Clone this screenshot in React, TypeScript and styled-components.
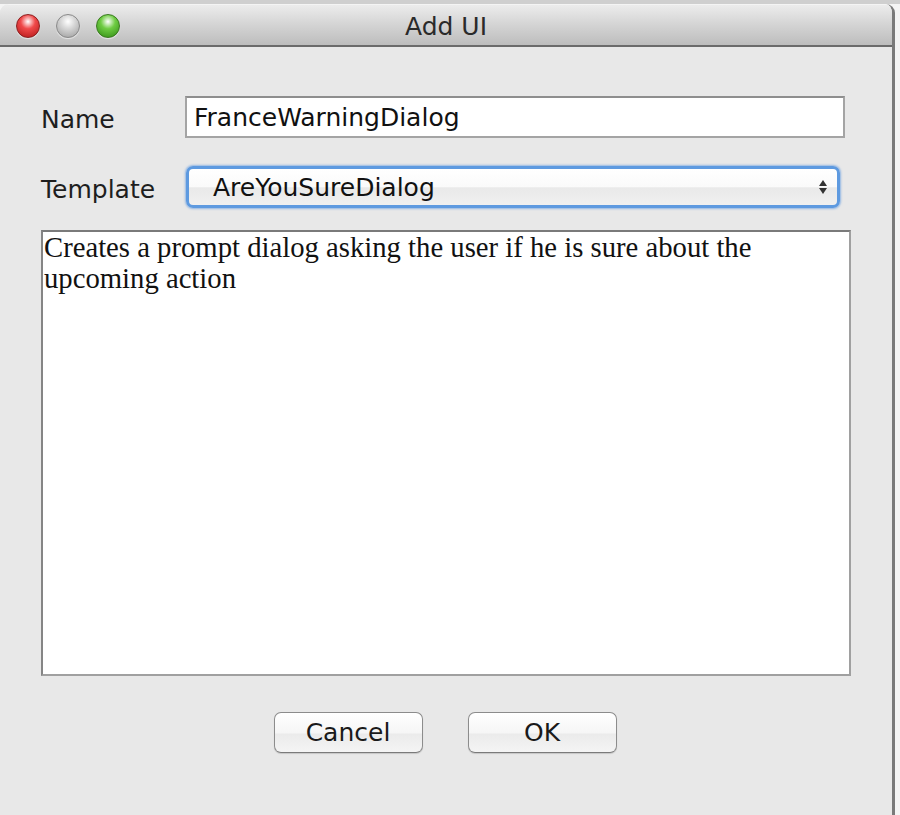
import React from "react";
import styled, { createGlobalStyle } from "styled-components";

const Global = createGlobalStyle`
  html, body { margin: 0; padding: 0; background: #f2f2f2; }
  body { width: 900px; height: 815px; overflow: hidden; }
`;

const Page = styled.div`
  width: 900px;
  height: 815px;
  padding-top: 4px;
  box-sizing: border-box;
  background: linear-gradient(#cfcfcf, #cfcfcf) top / 100% 4px no-repeat, #f4f4f4;
`;

const Window = styled.div`
  width: 895px;
  height: 811px;
  box-sizing: border-box;
  border-right: 3px solid #7a7a7a;
  border-radius: 9px 9px 0 0;
  background: #e8e8e8;
  display: flex;
  flex-direction: column;
  overflow: hidden;
`;

const TitleBar = styled.div`
  height: 43px;
  flex: none;
  position: relative;
  display: flex;
  align-items: center;
  justify-content: center;
  background: linear-gradient(#ececec, #d6d6d6 45%, #bdbdbd);
  border-bottom: 2px solid #6b6b6b;
  border-top: 1px solid #f4f4f4;
  box-sizing: border-box;
`;

const Lights = styled.div`
  position: absolute;
  left: 16px;
  top: 9px;
  display: flex;
  gap: 16px;
`;

const Light = styled.div<{ $c: string; $d: string; $e: string }>`
  width: 24px;
  height: 24px;
  border-radius: 50%;
  box-sizing: border-box;
  border: 1px solid ${(p) => p.$e};
  background: radial-gradient(circle at 50% 30%, #ffffff 0%, ${(p) => p.$c} 38%, ${(p) => p.$d} 100%);
  box-shadow: 0 1px 1px rgba(255, 255, 255, 0.6);
`;

const Title = styled.div`
  font-family: "DejaVu Sans", "Liberation Sans", sans-serif;
  font-size: 25px;
  color: #2a2a2a;
  padding-top: 2px;
`;

const Content = styled.div`
  flex: 1;
  padding: 49px 41px 0 41px;
  display: flex;
  flex-direction: column;
`;

const Row = styled.div<{ $mb: number }>`
  display: flex;
  align-items: center;
  height: 42px;
  margin-bottom: ${(p) => p.$mb}px;
`;

const Label = styled.div`
  width: 144px;
  flex: none;
  font-family: "DejaVu Sans", "Liberation Sans", sans-serif;
  font-size: 25px;
  color: #1e1e1e;
  padding-top: 4px;
`;

const TextField = styled.div`
  width: 660px;
  height: 42px;
  box-sizing: border-box;
  background: #fff;
  border: 2px solid #a4a4a4;
  border-top-color: #8e8e8e;
  padding: 0 7px;
  display: flex;
  align-items: center;
  font-family: "DejaVu Sans", "Liberation Sans", sans-serif;
  font-size: 25px;
  color: #111;
`;

const Select = styled.div`
  margin-left: 1px;
  width: 654px;
  height: 42px;
  box-sizing: border-box;
  border-radius: 7px;
  border: 3px solid #5e9ae0;
  box-shadow: 0 0 2px 1px rgba(90, 150, 225, 0.6);
  background: linear-gradient(#ffffff, #fafafa 50%, #e9e9e9 52%, #f0f0f0);
  display: flex;
  align-items: center;
  justify-content: space-between;
  padding: 0 9px 0 24px;
  font-family: "DejaVu Sans", "Liberation Sans", sans-serif;
  font-size: 25px;
  color: #111;
`;

const Arrows = styled.svg`
  width: 10px;
  height: 20px;
`;

const Description = styled.div`
  width: 810px;
  height: 446px;
  box-sizing: border-box;
  background: #fff;
  border: 2px solid #a0a0a0;
  border-top-color: #7a7a7a;
  border-left-color: #858585;
  padding: 0 40px 0 1px;
  font-family: "Liberation Serif", "Times New Roman", serif;
  font-size: 28.7px;
  line-height: 31px;
  color: #111;
`;

const Buttons = styled.div`
  display: flex;
  justify-content: center;
  gap: 45px;
  margin-top: 36px;
  padding-right: 2px;
`;

const Button = styled.div`
  width: 149px;
  height: 41px;
  box-sizing: border-box;
  border-radius: 7px;
  border: 1px solid #8c8c8c;
  border-bottom-color: #7a7a7a;
  background: linear-gradient(#ffffff, #f6f6f6 50%, #ebebeb 55%, #f4f4f4);
  box-shadow: 0 1px 1px rgba(0, 0, 0, 0.15);
  display: flex;
  align-items: center;
  justify-content: center;
  font-family: "DejaVu Sans", "Liberation Sans", sans-serif;
  font-size: 25px;
  color: #1a1a1a;
`;

export default function App() {
  return (
    <>
      <Global />
      <Page>
        <Window>
          <TitleBar>
            <Lights>
              <Light $c="#f0494a" $d="#b01515" $e="#8c2020" />
              <Light $c="#d6d6d6" $d="#9a9a9a" $e="#8a8a8a" />
              <Light $c="#6fcc43" $d="#2f8a12" $e="#3a7a20" />
            </Lights>
            <Title>Add UI</Title>
          </TitleBar>
          <Content>
            <Row $mb={28}>
              <Label>Name</Label>
              <TextField>FranceWarningDialog</TextField>
            </Row>
            <Row $mb={22}>
              <Label>Template</Label>
              <Select>
                <span>AreYouSureDialog</span>
                <Arrows viewBox="0 0 10 20">
                  <path d="M5 3 L9 9 L1 9 Z" fill="#333" />
                  <path d="M5 17 L9 11 L1 11 Z" fill="#333" />
                </Arrows>
              </Select>
            </Row>
            <Description>
              Creates a prompt dialog asking the user if he is sure about the upcoming action
            </Description>
            <Buttons>
              <Button>Cancel</Button>
              <Button>OK</Button>
            </Buttons>
          </Content>
        </Window>
      </Page>
    </>
  );
}
